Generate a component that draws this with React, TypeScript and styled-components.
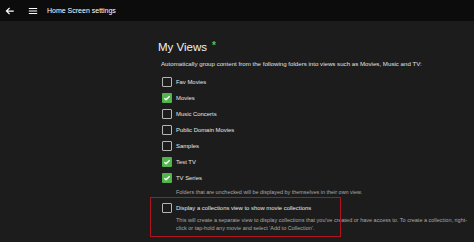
import styled, { createGlobalStyle } from "styled-components";

// #region CSS
const GlobalStyle = createGlobalStyle`
  html, body {
    margin: 0;
    padding: 0;
    background: #1c1c1c;
    font-family: "Liberation Sans", Arial, sans-serif;
    color: #e6e6e6;
  }
`;

const Page = styled.div`
  width: 474px;
  height: 242px;
  overflow: hidden;
  background: #1c1c1c;
`;

const Header = styled.div`
  height: 21px;
  background: #0c0c0c;
  display: flex;
  align-items: center;
  padding-left: 5px;
`;

const HeaderIcon = styled.div`
  width: 10px;
  height: 10px;
  display: flex;
  align-items: center;
  justify-content: center;
  margin-right: 13px;
`;

const HeaderTitle = styled.div`
  font-size: 7px;
  color: #ffffff;
  margin-left: -4px;
`;

const Content = styled.div`
  position: relative;
  padding-left: 158px;
  padding-top: 17px;
`;

const TitleRow = styled.div`
  display: flex;
  align-items: flex-start;
  gap: 5px;
  height: 18px;
`;

const Title = styled.h1`
  margin: 0;
  font-weight: normal;
  font-size: 11.5px;
  line-height: 18px;
  color: #f2f2f2;
`;

const Required = styled.span`
  color: #5cc052;
  font-size: 10px;
  font-weight: bold;
  line-height: 10px;
  margin-top: 3px;
`;

const Description = styled.p`
  margin: 4px 0 0 3px;
  font-size: 6.15px;
  line-height: 8px;
  color: #e0e0e0;
`;

const List = styled.div`
  margin: 6px 0 0 4px;
  display: flex;
  flex-direction: column;
`;

const Row = styled.label`
  display: flex;
  align-items: center;
  height: 16px;
  gap: 4px;
  font-size: 5.9px;
  color: #e6e6e6;
`;

const Box = styled.span<{ $checked?: boolean }>`
  width: 10px;
  height: 10px;
  box-sizing: border-box;
  border-radius: 1px;
  border: ${(p) => (p.$checked ? "none" : "1.3px solid #b5b5b5")};
  background: ${(p) => (p.$checked ? "#52b54b" : "transparent")};
  display: flex;
  align-items: center;
  justify-content: center;
  flex-shrink: 0;
`;

const Helper = styled.div`
  margin: 2px 0 0 18px;
  font-size: 5.45px;
  line-height: 8px;
  color: #a8a8a8;
`;

const CollectionBlock = styled.div`
  margin: 4px 0 0 4px;
`;

const CollectionText = styled.div`
  margin: 0 0 0 14px;
  font-size: 5.5px;
  line-height: 8px;
  color: #a8a8a8;
`;

const Annotation = styled.div`
  position: absolute;
  left: 150px;
  top: 176px;
  width: 189px;
  height: 38px;
  border: 1px solid #b0141e;
  pointer-events: none;
`;
// #endregion

const folders = [
  { name: "Fav Movies", checked: false },
  { name: "Movies", checked: true },
  { name: "Music Concerts", checked: false },
  { name: "Public Domain Movies", checked: false },
  { name: "Samples", checked: false },
  { name: "Test TV", checked: true },
  { name: "TV Series", checked: true },
];

function Check() {
  return (
    <svg width="8" height="8" viewBox="0 0 24 24">
      <path d="M4 12.5l5 5L20 6.5" fill="none" stroke="#fff" strokeWidth="4" />
    </svg>
  );
}

function Checkbox({ checked }: { checked?: boolean }) {
  return <Box $checked={checked}>{checked && <Check />}</Box>;
}

export default function App() {
  return (
    <Page>
      <GlobalStyle />
      <Header>
        <HeaderIcon>
          <svg width="10" height="10" viewBox="0 0 24 24">
            <path d="M21 12H4M11 4.5L3.5 12l7.5 7.5" fill="none" stroke="#fff" strokeWidth="3" />
          </svg>
        </HeaderIcon>
        <HeaderIcon>
          <svg width="10" height="10" viewBox="0 0 24 24">
            <path d="M2 6h20M2 12h20M2 18h20" fill="none" stroke="#fff" strokeWidth="2.8" />
          </svg>
        </HeaderIcon>
        <HeaderTitle>Home Screen settings</HeaderTitle>
      </Header>
      <Content>
        <TitleRow>
          <Title>My Views</Title>
          <Required>*</Required>
        </TitleRow>
        <Description>
          Automatically group content from the following folders into views such as Movies, Music and TV:
        </Description>
        <List>
          {folders.map((f) => (
            <Row key={f.name}>
              <Checkbox checked={f.checked} />
              {f.name}
            </Row>
          ))}
        </List>
        <Helper>Folders that are unchecked will be displayed by themselves in their own view.</Helper>
        <CollectionBlock>
          <Row>
            <Checkbox />
            Display a collections view to show movie collections
          </Row>
          <CollectionText>
            This will create a separate view to display collections that you've created or have access to. To create a collection, right-
            <br />
            click or tap-hold any movie and select 'Add to Collection'.
          </CollectionText>
        </CollectionBlock>
        <Annotation />
      </Content>
    </Page>
  );
}
